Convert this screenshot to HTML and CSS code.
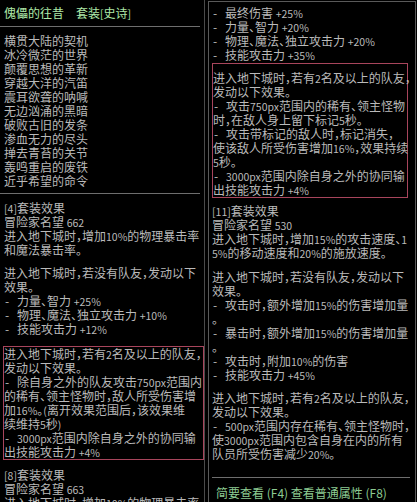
FILE: index.html
```html
<!DOCTYPE html>
<html lang="zh-CN">
<head>
<meta charset="utf-8">
<title>傀儡的往昔 套装[史诗]</title>
<link rel="stylesheet" href="styles.css">
</head>
<body>
<div class="tooltip">
  <section class="panel panel-left">
    <div class="title">傀儡的往昔　套装<span class="n">[</span>史诗<span class="n">]</span></div>
    <div class="sep"></div>
    <div class="block flavor">
      <div class="l">横贯大陆的契机</div>
      <div class="l">冰冷微茫的世界</div>
      <div class="l">颠覆思想的革新</div>
      <div class="l">穿越大洋的汽笛</div>
      <div class="l">震耳欲聋的呐喊</div>
      <div class="l">无边汹涌的黑暗</div>
      <div class="l">破败古旧的发条</div>
      <div class="l">渗血无力的尽头</div>
      <div class="l">掸去青苔的关节</div>
      <div class="l">轰鸣重启的废铁</div>
      <div class="l">近乎希望的命令</div>
    </div>
    <div class="sep sep-2"></div>
    <div class="block set-head">
      <div class="l"><span class="n">[4]</span>套装效果</div>
      <div class="l">冒险家名望 <span class="n">662</span></div>
      <div class="l">进入地下城时，增加<span class="n">10%</span>的物理暴击率</div>
      <div class="l">和魔法暴击率。</div>
    </div>
    <div class="block para">
      <div class="l">进入地下城时，若没有队友，发动以下</div>
      <div class="l">效果。</div>
      <div class="l"><span class="dash">-</span>力量、智力 <span class="n">+25%</span></div>
      <div class="l"><span class="dash">-</span>物理、魔法、独立攻击力 <span class="n">+10%</span></div>
      <div class="l"><span class="dash">-</span>技能攻击力 <span class="n">+12%</span></div>
    </div>
    <div class="block box box-left">
      <div class="l">进入地下城时，若有<span class="n">2</span>名及以上的队友，</div>
      <div class="l">发动以下效果。</div>
      <div class="l"><span class="dash">-</span>除自身之外的队友攻击<span class="n">750px</span>范围内</div>
      <div class="l">的稀有、领主怪物时，敌人所受伤害增</div>
      <div class="l">加<span class="n">16%</span>。<span class="n">(</span>离开效果范围后，该效果维</div>
      <div class="l">续维持<span class="n">5</span>秒<span class="n">)</span></div>
      <div class="l"><span class="dash">-</span><span class="n">3000px</span>范围内除自身之外的协同输</div>
      <div class="l">出技能攻击力 <span class="n">+4%</span></div>
    </div>
    <div class="block set-head set-8">
      <div class="l"><span class="n">[8]</span>套装效果</div>
      <div class="l">冒险家名望 <span class="n">663</span></div>
      <div class="l">进入地下城时，增加<span class="n">10%</span>的物理暴击率</div>
      <div class="l">和魔法暴击率。</div>
    </div>
  </section>

  <section class="panel panel-right">
    <div class="block first">
      <div class="l"><span class="dash">-</span>最终伤害 <span class="n">+25%</span></div>
      <div class="l"><span class="dash">-</span>力量、智力 <span class="n">+20%</span></div>
      <div class="l"><span class="dash">-</span>物理、魔法、独立攻击力 <span class="n">+20%</span></div>
      <div class="l"><span class="dash">-</span>技能攻击力 <span class="n">+35%</span></div>
    </div>
    <div class="block box box-right">
      <div class="l">进入地下城时，若有<span class="n">2</span>名及以上的队友，</div>
      <div class="l">发动以下效果。</div>
      <div class="l"><span class="dash">-</span>攻击<span class="n">750px</span>范围内的稀有、领主怪物</div>
      <div class="l">时，在敌人身上留下标记<span class="n">5</span>秒。</div>
      <div class="l"><span class="dash">-</span>攻击带标记的敌人时，标记消失，</div>
      <div class="l">使该敌人所受伤害增加<span class="n">16%</span>，效果持续</div>
      <div class="l"><span class="n">5</span>秒。</div>
      <div class="l"><span class="dash">-</span><span class="n">3000px</span>范围内除自身之外的协同输</div>
      <div class="l">出技能攻击力 <span class="n">+4%</span></div>
    </div>
    <div class="block set-head set-11">
      <div class="l"><span class="n">[11]</span>套装效果</div>
      <div class="l">冒险家名望 <span class="n">530</span></div>
      <div class="l">进入地下城时，增加<span class="n">15%</span>的攻击速度、<span class="n">1</span></div>
      <div class="l"><span class="n">5%</span>的移动速度和<span class="n">20%</span>的施放速度。</div>
    </div>
    <div class="block para para-r1">
      <div class="l">进入地下城时，若没有队友，发动以下</div>
      <div class="l">效果。</div>
      <div class="l"><span class="dash">-</span>攻击时，额外增加<span class="n">15%</span>的伤害增加量</div>
      <div class="l">。</div>
      <div class="l"><span class="dash">-</span>暴击时，额外增加<span class="n">15%</span>的伤害增加量</div>
      <div class="l">。</div>
      <div class="l"><span class="dash">-</span>攻击时，附加<span class="n">10%</span>的伤害</div>
      <div class="l"><span class="dash">-</span>技能攻击力 <span class="n">+45%</span></div>
    </div>
    <div class="block para para-r2">
      <div class="l">进入地下城时，若有<span class="n">2</span>名及以上的队友，</div>
      <div class="l">发动以下效果。</div>
      <div class="l"><span class="dash">-</span><span class="n">500px</span>范围内存在稀有、领主怪物时，</div>
      <div class="l">使<span class="n">3000px</span>范围内包含自身在内的所有</div>
      <div class="l">队员所受伤害减少<span class="n">20%</span>。</div>
    </div>
    <div class="sep sep-foot"></div>
    <div class="footer">简要查看 <span class="n">(F4)</span> 查看普通属性 <span class="n">(F8)</span></div>
  </section>
</div>
</body>
</html>
```
FILE: styles.css
```css
html, body {
  margin: 0;
  padding: 0;
  background: #000;
}

body {
  width: 417px;
  height: 502px;
  overflow: hidden;
  font-family: "Noto Sans CJK SC", "Noto Sans", sans-serif;
  font-size: 12px;
  color: #bababa;
  font-feature-settings: "halt";
}

.tooltip {
  display: flex;
  align-items: flex-start;
  height: 502px;
  overflow: hidden;
}

.panel {
  display: flex;
  flex-direction: column;
  flex: none;
}

.panel-left {
  width: 200px;
  height: 502px;
  padding-left: 4px;
  border-right: 1px solid #4a4a4a;
}

.panel-right {
  width: 203px;
  height: 501px;
  margin-top: 1px;
  margin-left: 3px;
  padding-left: 3px;
  border-left: 1px solid #595959;
  border-top: 1px solid #595959;
  border-right: 1px solid #595959;
}

.l {
  height: 14px;
  line-height: 14px;
  white-space: nowrap;
}

.n {
  font-size: 10.5px;
}

.dash {
  display: inline-block;
  width: 13px;
  padding-left: 1px;
  box-sizing: border-box;
}

.title {
  margin-top: 6px;
  height: 14px;
  line-height: 14px;
  color: #aee8a8;
  white-space: nowrap;
}

.sep {
  height: 1px;
  background: #6e6e6e;
  flex: none;
}

.panel-left .sep {
  width: 200px;
  margin-left: -4px;
  margin-top: 6px;
}

.panel-left .sep-2 {
  margin-top: 5px;
}

.flavor {
  margin-top: 7px;
}

.set-head {
  margin-top: 7px;
}

.para {
  margin-top: 9px;
}

.box {
  border: 1px solid #a8455c;
}

.box-left {
  margin-top: 10px;
  margin-left: -1px;
  width: 199px;
}

.set-8 {
  margin-top: 8px;
}

.first {
  margin-top: 4px;
}

.box-right {
  margin-top: 1px;
  margin-right: 7px;
  padding-top: 7px;
}

.set-11 {
  margin-top: 6px;
}

.para-r1 {
  margin-top: 10px;
}

.para-r2 {
  margin-top: 9px;
}

.panel-right .sep-foot {
  margin-top: 16px;
  margin-right: 5px;
}

.footer {
  margin-top: 8px;
  padding-left: 4px;
  height: 14px;
  line-height: 14px;
  font-size: 12px;
  color: #8ccb92;
  white-space: nowrap;
}

.footer .n {
  font-size: 12px;
}
```
